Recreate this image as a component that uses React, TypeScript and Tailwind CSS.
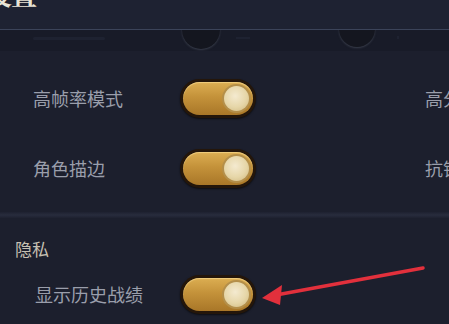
import React from 'react'

const cjk = { fontFamily: '"Noto Sans CJK SC", "Noto Sans", sans-serif' }

function Toggle() {
  return (
    <div className="shrink-0 w-[76px] h-[39px] rounded-full bg-[#24160a] p-[3px] shadow-[0_1px_2px_rgba(0,0,0,0.6)]">
      <div className="h-full w-full rounded-full bg-[linear-gradient(180deg,#dcae52_0%,#c4923a_45%,#a97728_100%)] flex items-center justify-end pr-[2px] shadow-[inset_0_1px_1px_rgba(255,230,160,0.6)]">
        <div className="shrink-0 w-[29px] h-[29px] rounded-full bg-[#b48f4a] p-[2px]">
          <div className="h-full w-full rounded-full bg-[radial-gradient(circle_at_45%_40%,#f4ead0_0%,#e6d6a8_55%,#cdb57c_100%)]" />
        </div>
      </div>
    </div>
  )
}

function Row({ label, right, pad = 'pl-[33px]' }: { label: string; right?: string; pad?: string }) {
  return (
    <div className="flex items-center h-[40px]">
      <div className={`shrink-0 w-[180px] ${pad} text-[18px] leading-none text-[#9a9eab] whitespace-nowrap`}>{label}</div>
      <Toggle />
      {right && <div className="shrink-0 ml-[169px] text-[18px] leading-none text-[#9a9eab] whitespace-nowrap">{right}</div>}
    </div>
  )
}

export default function App() {
  return (
    <div className="relative w-[449px] h-[324px] overflow-hidden bg-[#1c1f2d]" style={cjk}>
      <div className="h-[29px] overflow-hidden bg-[#1e2232]">
        <div className="ml-[-14px] mt-[-21px] text-[26px] leading-[30px] font-bold text-[#e9e4d6] tracking-[-1px] whitespace-nowrap" style={{ fontFamily: '"Noto Serif CJK SC", "Noto Sans CJK SC", serif' }}>
          设置
        </div>
      </div>
      <div className="h-px bg-[#3b4359]" />
      <div className="h-[21px] overflow-hidden bg-[#181b28] flex">
        <div className="shrink-0 w-[33px]" />
        <div className="shrink-0 w-[72px] h-[3px] mt-[7px] bg-[#1e2231] rounded" />
        <div className="shrink-0 w-[77px]" />
        <div className="shrink-0 w-[38px] h-[38px] mt-[-19px] rounded-full bg-[#14161f] shadow-[0_1px_2px_rgba(90,95,110,0.5)]" />
        <div className="shrink-0 w-[16px]" />
        <div className="shrink-0 w-[14px] h-[2px] mt-[7px] bg-[#1e2231]" />
        <div className="shrink-0 w-[89px]" />
        <div className="shrink-0 w-[36px] h-[36px] mt-[-19px] rounded-full bg-[#14161f] shadow-[0_1px_2px_rgba(90,95,110,0.5)]" />
        <div className="shrink-0 w-[22px]" />
        <div className="shrink-0 w-[2px] h-[3px] mt-[6px] bg-[#1e2231]" />
      </div>
      <div className="pt-[27px] flex flex-col gap-[30px]">
        <Row label="高帧率模式" right="高分辨率" />
        <Row label="角色描边" right="抗锯齿" />
      </div>
      <div className="mt-[24px] h-[6px] bg-[linear-gradient(180deg,#1e2130_0%,#282c3d_50%,#1e2130_100%)]" />
      <div className="mt-[21px] pl-[15px] text-[17px] leading-[20px] text-[#c6c0b3]">隐私</div>
      <div className="mt-[15px]">
        <Row label="显示历史战绩" pad="pl-[35px]" />
      </div>
      <svg className="absolute left-0 top-0" width="449" height="324" viewBox="0 0 449 324">
        <line x1="423" y1="268" x2="276" y2="295" stroke="#e2303c" strokeWidth="3.5" strokeLinecap="round" />
        <polygon points="262,298 282,285 280,305" fill="#e2303c" />
      </svg>
    </div>
  )
}
